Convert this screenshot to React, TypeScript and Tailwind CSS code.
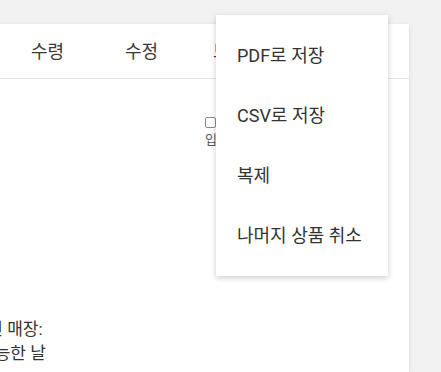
import React from 'react';

const font = { fontFamily: 'Roboto, "Noto Sans CJK KR", sans-serif' };

const menuItems = ['PDF로 저장', 'CSV로 저장', '복제', '나머지 상품 취소'];

export default function App() {
  return (
    <div className="relative h-[372px] w-[441px] overflow-hidden bg-[#f2f2f2]" style={font}>
      <div className="ml-[-60px] mt-[24px] h-[348px] w-[469px] bg-white shadow-[0_1px_4px_rgba(0,0,0,0.12)]">
        <div className="flex h-[55px] items-center border-b border-[#e3e3e3] pl-[91px] text-[18px] text-[#3a3a3a]">
          <span className="w-[94px]">수령</span>
          <span className="w-[88px]">수정</span>
          <span>보관</span>
        </div>
        <div className="flex pl-[265px] pt-[38px]">
          <div className="flex flex-col items-start">
            <span className="h-[11px] w-[11px] rounded-[2px] border border-[#8a8a8a] bg-white" />
            <span className="mt-[3px] text-[13px] leading-[18px] text-[#555]">입고</span>
          </div>
        </div>
        <div className="pt-[168px] text-[17px] leading-[24px] text-[#333]">
          <div className="pl-[16px]">선택된 매장:</div>
          <div className="pl-[39px]">가능한 날</div>
        </div>
      </div>

      <div className="absolute left-[216px] top-[15px] w-[172px] bg-white pb-[11px] pt-[10px] shadow-[0_2px_6px_rgba(0,0,0,0.2)]">
        {menuItems.map(item => (
          <div key={item} className="flex h-[60px] items-center px-[21px] text-[18px] text-[#333]">
            {item}
          </div>
        ))}
      </div>
    </div>
  );
}
